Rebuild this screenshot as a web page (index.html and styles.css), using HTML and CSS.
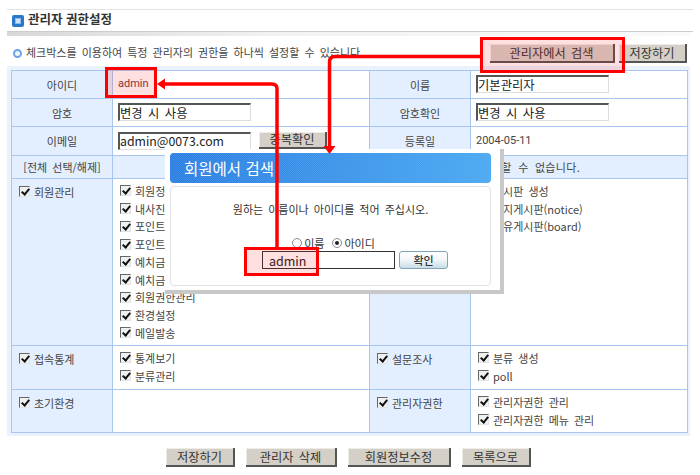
FILE: index.html
```html
<!DOCTYPE html>
<html lang="ko">
<head>
<meta charset="utf-8">
<title>관리자 권한설정</title>
<link rel="stylesheet" href="styles.css">
</head>
<body>
<div class="page">
  <header class="title-bar">
    <span class="title-icon"><span></span></span>
    <h1>관리자 권한설정</h1>
  </header>
  <div class="title-fade"></div>

  <div class="toolbar">
    <p class="note"><span class="ring"></span><span class="note-text">체크박스를 이용하여 특정 관리자의 권한을 하나씩 설정할 수 있습니다.</span></p>
    <button class="btn btn-search">관리자에서 검색</button>
    <button class="btn btn-save">저장하기</button>
  </div>

  <div class="frame">
    <table class="grid">
      <colgroup><col class="c1"><col class="c2"><col class="c3"><col class="c4"></colgroup>
      <tr class="r1">
        <th>아이디</th><td class="admin">admin</td>
        <th>이름</th><td><input class="field" value="기본관리자"></td>
      </tr>
      <tr class="r2">
        <th>암호</th><td><input class="field" value="변경 시 사용"></td>
        <th>암호확인</th><td><input class="field" value="변경 시 사용"></td>
      </tr>
      <tr class="r3">
        <th>이메일</th>
        <td><input class="field" value="admin@0073.com"><button class="btn btn-dup">중복확인</button></td>
        <th>등록일</th><td class="date">2004-05-11</td>
      </tr>
      <tr class="r4">
        <th>[전체 선택/해제]</th>
        <th colspan="3" class="notice">체크하지 않은 메뉴는 해당 관리자가 이용할 수 없습니다.</th>
      </tr>
      <tr class="r5">
        <th class="group"><label><input type="checkbox" class="cb" checked>회원관리</label></th>
        <td class="list">
          <label><input type="checkbox" class="cb" checked>회원정보 관리</label>
          <label><input type="checkbox" class="cb" checked>내사진 관리</label>
          <label><input type="checkbox" class="cb" checked>포인트 관리</label>
          <label><input type="checkbox" class="cb" checked>포인트 내역</label>
          <label><input type="checkbox" class="cb" checked>예치금 관리</label>
          <label><input type="checkbox" class="cb" checked>예치금 내역</label>
          <label><input type="checkbox" class="cb" checked>회원권한관리</label>
          <label><input type="checkbox" class="cb" checked>환경설정</label>
          <label><input type="checkbox" class="cb" checked>메일발송</label>
        </td>
        <th class="group"><label><input type="checkbox" class="cb" checked>게시판</label></th>
        <td class="list">
          <label><input type="checkbox" class="cb" checked>게시판 생성</label>
          <label><input type="checkbox" class="cb" checked>공지게시판(notice)</label>
          <label><input type="checkbox" class="cb" checked>자유게시판(board)</label>
        </td>
      </tr>
      <tr class="r6">
        <th class="group"><label><input type="checkbox" class="cb" checked>접속통계</label></th>
        <td class="list">
          <label><input type="checkbox" class="cb" checked>통계보기</label>
          <label><input type="checkbox" class="cb" checked>분류관리</label>
        </td>
        <th class="group"><label><input type="checkbox" class="cb" checked>설문조사</label></th>
        <td class="list">
          <label><input type="checkbox" class="cb" checked>분류 생성</label>
          <label><input type="checkbox" class="cb" checked>poll</label>
        </td>
      </tr>
      <tr class="r7">
        <th class="group"><label><input type="checkbox" class="cb" checked>초기환경</label></th>
        <td class="list"></td>
        <th class="group"><label><input type="checkbox" class="cb" checked>관리자권한</label></th>
        <td class="list">
          <label><input type="checkbox" class="cb" checked>관리자권한 관리</label>
          <label><input type="checkbox" class="cb" checked>관리자권한 메뉴 관리</label>
        </td>
      </tr>
    </table>
  </div>

  <div class="actions">
    <button class="btn btn-a1">저장하기</button>
    <button class="btn btn-a2">관리자 삭제</button>
    <button class="btn btn-a3">회원정보수정</button>
    <button class="btn btn-a1">목록으로</button>
  </div>

  <section class="popup">
    <h2>회원에서 검색</h2>
    <div class="popup-body">
      <p>원하는 이름이나 아이디를 적어 주십시오.</p>
      <div class="radios">
        <label><input type="radio" class="rd" name="k">이름</label>
        <label><input type="radio" class="rd" name="k" checked>아이디</label>
      </div>
      <div class="search">
        <input class="search-input" value="admin">
        <button class="ok">확인</button>
      </div>
    </div>
  </section>

  <div class="mark mark-admin"></div>
  <div class="mark mark-button"></div>
  <div class="mark mark-input"></div>
  <svg class="arrows" width="700" height="475" viewBox="0 0 700 475" aria-hidden="true">
    <path d="M480 56.5H335Q329.5 56.5 329.500 62V147" fill="none" stroke="#f00" stroke-width="3.5"/>
    <path d="M323.500 146H335.500L329.500 154Z" fill="#f00"/>
    <path d="M277 247V89Q277 84 272 84H164" fill="none" stroke="#f00" stroke-width="3.5"/>
    <path d="M165 78.500V89.500L157 84Z" fill="#f00"/>
  </svg>
</div>
</body>
</html>
```

FILE: styles.css
```css
* { box-sizing: border-box; }
html, body { margin: 0; padding: 0; background: #fff; }
body { font-family: "Noto Sans CJK KR", "Noto Sans", sans-serif; font-size: 11px; color: #444; word-spacing: 2px; }
.page { position: relative; width: 700px; height: 475px; overflow: hidden; padding-top: 9px; }

.title-bar { display: flex; align-items: center; gap: 4px; height: 23px; margin: 0 7px; padding-left: 5px; border-top: 1px solid #e4e4e4; border-bottom: 1px solid #ccc; }
.title-bar h1 { margin: 0; padding-bottom: 3px; font-size: 12.500px; font-weight: 700; color: #333; line-height: 16px; word-spacing: 0; }
.title-icon { display: flex; align-items: center; justify-content: center; width: 12px; height: 12px; border-radius: 2px; background: #2a78c8; }
.title-icon span { width: 6px; height: 6px; background: #cfe4fa; border: 1px solid #8fbbe6; }
.title-fade { width: 683px; height: 4px; margin: 0 7px; background: linear-gradient(90deg, #d8d8d8, #f2f2f2 40%, #fafafa); }

.toolbar { display: flex; align-items: center; height: 19px; margin-top: 8px; padding-left: 13px; }
.note { display: flex; align-items: center; gap: 4px; width: 477px; margin: 0; white-space: nowrap; }
.note-text { padding-bottom: 3px; }
.ring { flex: none; width: 9px; height: 9px; border-radius: 50%; border: 2px solid #6aa5e6; background: #eef5fd; }

.btn { margin: 0; padding: 0; height: 19px; border: 0; border-right: 2px solid #555; border-bottom: 2px solid #555; background: #d4d0c8; color: #333; font: 12.200px/16px "Noto Sans CJK KR", "Noto Sans", sans-serif; word-spacing: 2px; box-shadow: inset 1px 1px 0 #eeece6; }
.btn-search { width: 125px; }
.btn-save { width: 68px; margin-left: 4px; }
.btn-dup { width: 68px; height: 17px; margin-left: 8px; vertical-align: top; line-height: 14px; }

.frame { width: 683px; height: 370px; margin: 3px 0 0 7px; padding: 4px; background: #eaf2fd; }
.grid { width: 676px; height: 362px; table-layout: fixed; border-collapse: collapse; background: #fff; }
.c1 { width: 101px; } .c2 { width: 257px; } .c3 { width: 101px; } .c4 { width: 217px; }
.grid th, .grid td { padding: 0; border: 1px solid #a9c6f0; font-size: 11px; font-weight: 400; color: #444; line-height: 16px; }
.grid th { background: #e3eeff; text-align: center; }
.grid td { padding: 0 0 1px 5px; vertical-align: middle; }
.r1 { height: 28px; } .r2 { height: 28px; } .r3 { height: 29px; } .r4 { height: 23px; }
.r5 { height: 167px; } .r6 { height: 44px; } .r7 { height: 43px; }
.grid .admin { color: #7a3a40; font-family: Roboto, sans-serif; font-size: 11px; }
.grid .date { color: #444; font-family: Roboto, sans-serif; }
.grid .notice { text-align: right; padding-right: 107px; white-space: nowrap; word-spacing: 3px; letter-spacing: 0.3px; }

.field { width: 133px; height: 18px; padding: 0; vertical-align: top; border: 1px solid; border-width: 2px 1px 1px 2px; border-color: #555 #ddd #ddd #555; background: #fff; color: #222; font: 12.300px/14px "Noto Sans CJK KR", "Noto Sans", sans-serif; word-spacing: 2px; }

.grid .group { vertical-align: top; text-align: left; padding: 4px 0 0 7px; }
.grid .list { vertical-align: top; padding: 3px 0 0 7px; }
.group label, .list label { display: flex; align-items: center; gap: 4px; height: 17.750px; white-space: nowrap; }
.cb { appearance: none; position: relative; flex: none; width: 11px; height: 11px; margin: 0; border: 1px solid; border-color: #666 #e4e4e4 #e4e4e4 #666; background: #f0f0f0; }
.cb::after { content: ""; position: absolute; left: 3px; top: 0; width: 3px; height: 6px; border: solid #111; border-width: 0 2px 2px 0; transform: rotate(40deg); }

.actions { display: flex; justify-content: flex-start; gap: 11px; margin: 12px 0 0 166px; }
.btn-a1 { width: 69px; }
.btn-a2 { width: 91px; }
.btn-a3 { width: 103px; }

.popup { position: absolute; left: 165px; top: 149px; width: 339px; height: 145px; padding: 4px 9px 8px 5px; background: #fff; border-right: 4px solid #c8c8c8; border-bottom: 4px solid #c8c8c8; }
.popup h2 { margin: 0 0 3px; height: 30px; padding-left: 14px; border-radius: 4px; background: repeating-conic-gradient(rgba(255, 255, 255, 0.07) 0 25%, transparent 0 50%) 0 0 / 2px 2px, linear-gradient(100deg, #2b7fe2, #4ba9f2); color: #fff; font-size: 15.500px; font-weight: 400; line-height: 30px; word-spacing: 0; }
.popup-body { height: 100px; border: 1px solid #e2e2e2; border-radius: 4px; color: #333; text-align: center; }
.popup-body p { margin: 14px 0 0; line-height: 16px; font-size: 11px; }
.radios { display: flex; justify-content: center; align-items: center; gap: 8px; height: 16px; margin-top: 18px; padding-left: 6px; word-spacing: 0; }
.radios label { display: flex; align-items: center; gap: 2px; }
.rd { appearance: none; position: relative; width: 10px; height: 10px; margin: 0; border: 1px solid #888; border-radius: 50%; background: #fff; }
.rd:checked::after { content: ""; position: absolute; left: 2px; top: 2px; width: 4px; height: 4px; border-radius: 50%; background: #222; }
.search { display: flex; gap: 4px; margin: 0 0 0 91px; height: 18px; }
.search-input { width: 133px; height: 18px; padding: 0 0 0 6px; border: 1px solid #333; background: #fff; color: #222; font: 12.500px/16px "Noto Sans CJK KR", "Noto Sans", sans-serif; }
.ok { width: 49px; height: 18px; padding: 0; border: 1px solid #7fa3b8; border-radius: 3px; background: linear-gradient(#fff, #f4f8fa 45%, #c9dde6); color: #333; font: 500 11px/14px "Noto Sans CJK KR", sans-serif; }

.mark { position: absolute; border: 3px solid #f00; background: rgba(255, 0, 0, 0.12); }
.mark-admin { left: 105px; top: 67px; width: 52px; height: 31px; }
.mark-button { left: 480px; top: 37px; width: 145px; height: 36px; }
.mark-input { left: 244px; top: 247px; width: 75px; height: 29px; }
.arrows { position: absolute; left: 0; top: 0; pointer-events: none; }
```
